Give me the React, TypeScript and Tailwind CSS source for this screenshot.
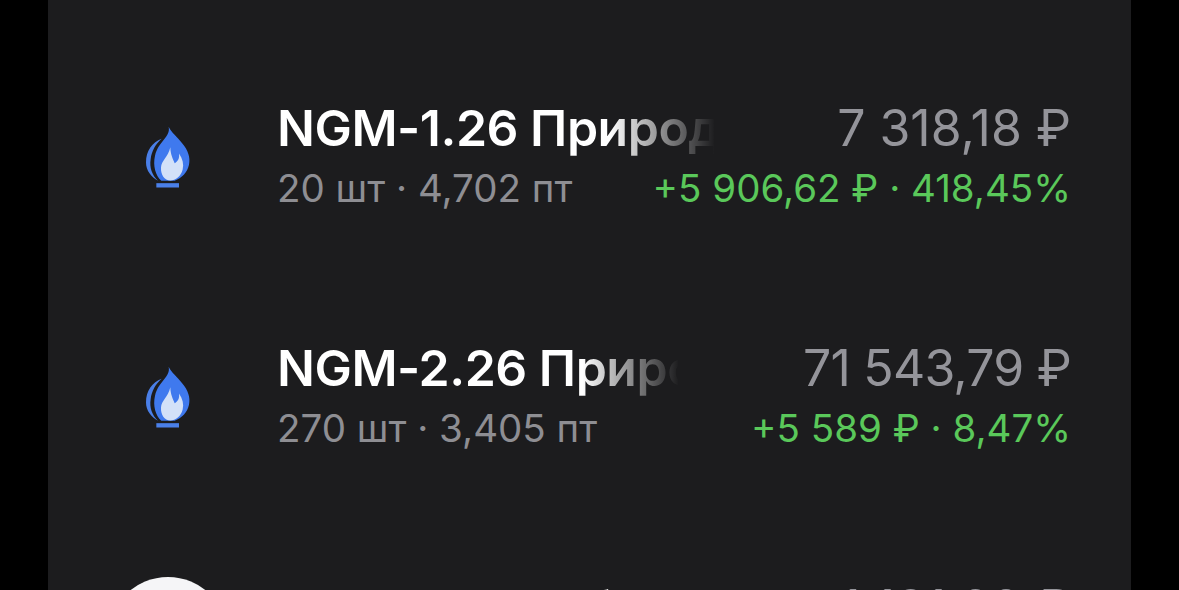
const rows = [
  {
    name: "NGM-1.26 Природный газ",
    nameWidth: "w-[438px]",
    meta: "20 шт · 4,702 пт",
    price: "7 318,18 ₽",
    priceTracking: "tracking-normal",
    change: "+5 906,62 ₽ · 418,45%",
    icon: "gas",
  },
  {
    name: "NGM-2.26 Природный газ",
    nameWidth: "w-[402px]",
    meta: "270 шт · 3,405 пт",
    price: "71 543,79 ₽",
    priceTracking: "tracking-[-0.8px]",
    change: "+5 589 ₽ · 8,47%",
    icon: "gas",
  },
  {
    name: "SBRF-3.26 Обыкновенные",
    nameWidth: "w-[438px]",
    meta: "10 шт · 31 160 пт",
    price: "1 131,60 ₽",
    priceTracking: "tracking-normal",
    change: "+120 ₽ · 1,2%",
    icon: "circle",
  },
];

function GasIcon() {
  return (
    <svg viewBox="70 70 150 200" className="h-[67px] w-[50px]">
      <path
        d="M147 78C156 96 172 108 188 128C205 148 213 170 208 192C203 216 186 232 165 240L125 240C108 225 99 195 106 165C111 142 122 130 133 116C143 104 150 94 147 78Z"
        fill="#3f79ee"
      />
      <path
        d="M126 114C98 124 79 150 79 185C79 210 95 228 115 240C97 222 89 200 93 175C96 150 108 130 126 114Z"
        fill="#4a7fe8"
      />
      <path
        d="M152 139C152 160 160 174 165 187C175 182 180 172 178 158C189 174 193 190 189 206C184 226 168 239 152 239C134 239 123 222 124 200C125 178 145 170 152 139Z"
        fill="#d3e1f8"
      />
      <rect x="110" y="247" width="68" height="13" fill="#4a7fe8" />
    </svg>
  );
}

export default function App() {
  return (
    <div className="h-[590px] overflow-hidden bg-black px-12 font-['Inter',sans-serif]">
      <div className="flex h-full flex-col bg-[#1c1c1e] pt-[37px]">
        {rows.map((row) => (
          <div key={row.name} className="flex h-[240px] shrink-0 items-center pl-[60px] pr-[60px]">
            <div className="flex w-[120px] shrink-0 justify-center">
              {row.icon === "gas" ? (
                <GasIcon />
              ) : (
                <div className="h-[120px] w-[120px] rounded-full bg-[#f5f5f7]" />
              )}
            </div>
            <div className="ml-[49px] min-w-0 flex-1 pt-[2px]">
              <div className="flex items-center justify-between">
                <div
                  className={`${row.nameWidth} overflow-hidden whitespace-nowrap bg-gradient-to-r from-white from-[76%] to-transparent bg-clip-text text-[50px] leading-[60px] font-semibold tracking-[-0.5px] text-transparent`}
                >
                  {row.name}
                </div>
                <div className={`${row.priceTracking} text-[50px] leading-[60px] whitespace-nowrap text-[#94949a]`}>
                  {row.price}
                </div>
              </div>
              <div className="flex items-center justify-between">
                <div className="text-[38.5px] leading-[60px] whitespace-nowrap text-[#8e8e93]">{row.meta}</div>
                <div className="text-[38.5px] leading-[60px] whitespace-nowrap text-[#5ac85a]">{row.change}</div>
              </div>
            </div>
          </div>
        ))}
      </div>
    </div>
  );
}
